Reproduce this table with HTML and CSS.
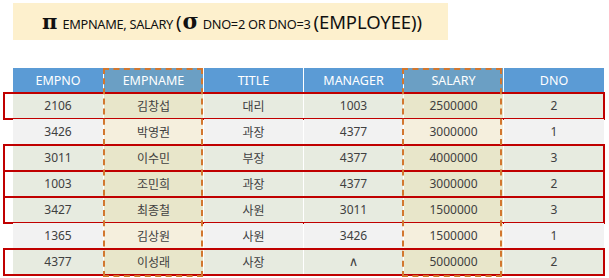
FILE: index.html
```html
<!DOCTYPE html>
<html lang="ko">
<head>
<meta charset="utf-8">
<link rel="stylesheet" href="styles.css">
</head>
<body>
<div class="page">
  <div class="formula">
    <span class="op">π</span><span class="sm">EMPNAME, SALARY</span><span class="lg paren">(</span><span class="op sigma">σ</span><span class="sm">DNO=2 OR DNO=3</span><span class="lg">(EMPLOYEE))</span>
  </div>
  <div class="table">
    <div class="row head">
      <div class="c">EMPNO</div><div class="c hl">EMPNAME</div><div class="c">TITLE</div><div class="c">MANAGER</div><div class="c hl">SALARY</div><div class="c">DNO</div>
    </div>
    <div class="row sel">
      <div class="c">2106</div><div class="c hl">김창섭</div><div class="c">대리</div><div class="c">1003</div><div class="c hl">2500000</div><div class="c">2</div>
    </div>
    <div class="row">
      <div class="c">3426</div><div class="c hl">박영권</div><div class="c">과장</div><div class="c">4377</div><div class="c hl">3000000</div><div class="c">1</div>
    </div>
    <div class="row sel">
      <div class="c">3011</div><div class="c hl">이수민</div><div class="c">부장</div><div class="c">4377</div><div class="c hl">4000000</div><div class="c">3</div>
    </div>
    <div class="row sel">
      <div class="c">1003</div><div class="c hl">조민희</div><div class="c">과장</div><div class="c">4377</div><div class="c hl">3000000</div><div class="c">2</div>
    </div>
    <div class="row sel">
      <div class="c">3427</div><div class="c hl">최종철</div><div class="c">사원</div><div class="c">3011</div><div class="c hl">1500000</div><div class="c">3</div>
    </div>
    <div class="row">
      <div class="c">1365</div><div class="c hl">김상원</div><div class="c">사원</div><div class="c">3426</div><div class="c hl">1500000</div><div class="c">1</div>
    </div>
    <div class="row sel">
      <div class="c">4377</div><div class="c hl">이성래</div><div class="c">사장</div><div class="c wedge">∧</div><div class="c hl">5000000</div><div class="c">2</div>
    </div>
    <div class="dash dash-name"></div>
    <div class="dash dash-salary"></div>
  </div>
</div>
</body>
</html>
```
FILE: styles.css
```css
* { box-sizing: border-box; }
html, body { margin: 0; padding: 0; background: #ffffff; }
body { width: 609px; height: 278px; overflow: hidden; }

.page {
  display: flex;
  flex-direction: column;
  padding: 3px 0 0 13px;
}

.formula {
  width: 435px;
  height: 37px;
  background: #fdf0cd;
  display: flex;
  align-items: baseline;
  justify-content: flex-start;
  padding: 4px 0 0 29px;
  font-family: "Noto Sans", "Liberation Sans", sans-serif;
  color: #111;
  line-height: 28px;
}
.formula .op {
  font-family: "DejaVu Serif", "Liberation Serif", serif;
  font-size: 21px;
  font-weight: bold;
  margin-right: 5px;
}
.formula .sigma { margin-left: 1px; margin-right: 4px; font-size: 22px; }
.formula .sm { font-size: 12.8px; letter-spacing: -0.3px; margin-right: 3px; }
.formula .lg { font-size: 18.5px; letter-spacing: -0.1px; }
.formula .paren { margin-left: 0; }

.table {
  position: relative;
  margin-top: 28px;
  width: 590px;
  display: grid;
  row-gap: 0.5px;
  font-family: "Noto Sans", "Noto Sans CJK KR", sans-serif;
  font-size: 12px;
}

.row {
  position: relative;
  display: grid;
  grid-template-columns: 90px 99px 99px 99px 99px 100px;
  column-gap: 1px;
  height: 25.5px;
}
.row .c {
  display: flex;
  align-items: center;
  justify-content: center;
  color: #404040;
  background: #f2f2f2;
}
.row .c.hl { background: #f5efdd; }
.row .c.wedge { font-family: "DejaVu Sans", sans-serif; font-size: 13px; }

.row.sel .c { background: #e7ebe0; }
.row.sel .c.hl { background: #e8e6ca; }
.row.sel::after {
  content: "";
  position: absolute;
  left: -10px;
  right: -1px;
  top: -1px;
  bottom: -1px;
  border: 2px solid #c00000;
  pointer-events: none;
}

.row.head { height: 24.5px; }
.row.head .c { background: #5b9bd5; color: #ffffff; font-size: 12.5px; }
.row.head .c.hl { background: #6b9fc4; }

.dash {
  position: absolute;
  top: 0;
  bottom: -2px;
  width: 100px;
  border: 2px dashed #d2772f;
  pointer-events: none;
}
.dash-name { left: 90px; }
.dash-salary { left: 389px; }
```
